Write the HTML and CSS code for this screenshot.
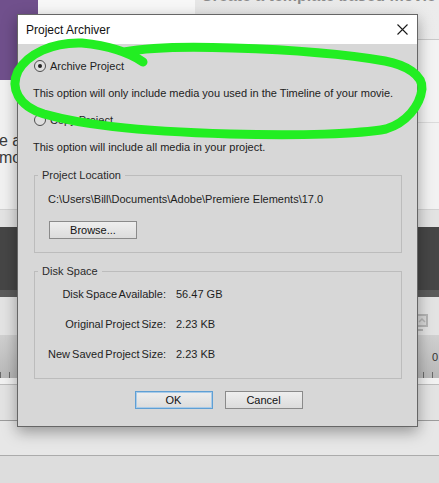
FILE: index.html
```html
<!DOCTYPE html>
<html lang="en">
<head>
    <meta charset="UTF-8">
    <title>Project Archiver</title>
    <link rel="stylesheet" href="styles.css">
</head>
<body>
    <div class="app">
        <div class="band band-top">
            <div class="side-left">
                <div class="purple"></div>
                <p class="hint">e as<br>mov</p>
            </div>
            <div class="top-main">
                <div class="header-strip"><span class="header-title">Create a template based movie</span></div>
                <div class="panel-a"></div>
                <div class="panel-b"></div>
            </div>
        </div>
        <div class="band band-sub"></div>
        <div class="band band-dark"></div>
        <div class="band band-dark2"></div>
        <div class="band band-light">
            <svg class="monitor" width="12" height="20" viewBox="0 0 12 20">
                <rect x="1" y="1" width="10" height="11" fill="#d8d8d8" stroke="#b4b4b4" stroke-width="2"/>
                <path d="M3 8 L6 5 L9 8" fill="none" stroke="#b4b4b4" stroke-width="1.5"/>
                <rect x="0" y="15" width="7" height="2" fill="#b4b4b4"/>
            </svg>
        </div>
        <div class="band band-ruler"><span class="ruler-num">0</span></div>
        <div class="band band-thin"></div>
        <div class="band band-e"></div>
        <div class="band band-f"></div>
        <div class="band band-g"></div>
    </div>

    <div class="dialog">
        <div class="titlebar">
            <span>Project Archiver</span>
            <svg class="close" width="11" height="11" viewBox="0 0 11 11">
                <path d="M0.5 0.5 L10.5 10.5 M10.5 0.5 L0.5 10.5" stroke="#1a1a1a" stroke-width="1.1"/>
            </svg>
        </div>
        <div class="dialog-body">
            <div class="option">
                <span class="radio checked"></span>
                <span>Archive Project</span>
            </div>
            <p class="desc">This option will only include media you used in the Timeline of your movie.</p>
            <div class="option">
                <span class="radio"></span>
                <span>Copy Project</span>
            </div>
            <p class="desc">This option will include all media in your project.</p>

            <fieldset class="group group-location">
                <legend>Project Location</legend>
                <div class="group-inner">
                    <div class="path">C:\Users\Bill\Documents\Adobe\Premiere Elements\17.0</div>
                    <button class="btn btn-browse">Browse...</button>
                </div>
            </fieldset>

            <fieldset class="group group-disk">
                <legend>Disk Space</legend>
                <div class="group-inner disk-grid">
                    <span class="disk-label">Disk Space Available:</span><span>56.47 GB</span>
                    <span class="disk-label">Original Project Size:</span><span>2.23 KB</span>
                    <span class="disk-label">New Saved Project Size:</span><span>2.23 KB</span>
                </div>
            </fieldset>

            <div class="actions">
                <button class="btn btn-ok">OK</button>
                <button class="btn">Cancel</button>
            </div>
        </div>
    </div>

    <svg class="scribble" width="439" height="483" viewBox="0 0 439 483">
        <path d="M143 62 C130 53 112 46 82 43 C52 42 28 54 18 71 C10 88 18 106 44 114 C80 124 130 131 230 134 C300 136 360 134 386 129 C406 123 420 106 422 89 C423 75 406 65 385 61 C345 54 300 50 233 48 C180 46 145 48 124 52"
              fill="none" stroke="#22ee22" stroke-width="9" stroke-linecap="round" stroke-linejoin="round"/>
    </svg>
</body>
</html>
```

FILE: styles.css
```css
body {
    margin: 0;
    width: 439px;
    height: 483px;
    overflow: hidden;
    position: relative;
    font-family: "Liberation Sans", Arial, sans-serif;
    background: #dcdcdc;
}
.app {
    display: flex;
    flex-direction: column;
    height: 483px;
}
.band {
    flex: none;
    box-sizing: border-box;
}
.band-top {
    height: 210px;
    display: flex;
    background: #f1f1f1;
    border-bottom: 1px solid #d2d2d2;
}
.side-left {
    width: 38px;
    flex: none;
}
.purple {
    height: 80px;
    background: #70508c;
}
.hint {
    margin: 52px 0 0 -1px;
    font-size: 16px;
    line-height: 17px;
    color: #3a3a3a;
    white-space: nowrap;
}
.top-main {
    flex: 1;
    display: flex;
    flex-direction: column;
}
.header-strip {
    height: 40px;
    box-sizing: border-box;
    background: linear-gradient(90deg, #f7f7f7 0 157px, #e6e6e6 157px, #ececec);
    border-bottom: 1px solid #c9c9c9;
    overflow: hidden;
}
.header-title {
    display: block;
    margin: -13px 0 0 163px;
    font-size: 16px;
    font-weight: bold;
    color: #8a8a8a;
    white-space: nowrap;
}
.panel-a {
    height: 83px;
    box-sizing: border-box;
    border-bottom: 1px solid #dbdbdb;
    background: #f3f3f3;
}
.panel-b {
    flex: 1;
    background: #f2f2f2;
}
.band-sub { height: 17px; background: #e3e3e3; }
.band-dark { height: 63px; background: #464646; }
.band-dark2 { height: 7px; background: #5b5b5b; }
.band-light {
    height: 38px;
    background: #e3e3e3;
    display: flex;
    justify-content: flex-end;
    align-items: flex-start;
}
.monitor {
    margin: 17px 11px 0 0;
}
.band-ruler {
    height: 43px;
    background:
        repeating-linear-gradient(90deg, #6a6a6a 0 1px, transparent 1px 9px) left bottom / 100% 6px no-repeat,
        linear-gradient(#d0d0d0, #b8b8b8);
    display: flex;
    justify-content: flex-end;
    align-items: center;
}
.ruler-num {
    margin-right: 1px;
    font-size: 11px;
    color: #333;
}
.band-thin {
    height: 7px;
    background: #f2f2f2;
    border-bottom: 1px solid #bdbdbd;
}
.band-e {
    height: 36px;
    background: #e3e3e3;
    border-bottom: 1px solid #9c9c9c;
}
.band-f {
    height: 35px;
    background: #e7e7e7;
    border-bottom: 1px solid #ababab;
}
.band-g {
    flex: 1;
    background: #dddddd;
}

/* dialog */
.dialog {
    position: absolute;
    left: 17px;
    top: 14px;
    width: 401px;
    height: 413px;
    box-sizing: border-box;
    border: 1px solid #666;
    background: #d7d7d7;
    box-shadow: 0 5px 14px rgba(0,0,0,0.35);
    display: flex;
    flex-direction: column;
    color: #1e1e1e;
}
.titlebar {
    height: 29px;
    flex: none;
    background: #fff;
    display: flex;
    align-items: center;
    justify-content: space-between;
    padding: 0 9px 0 8px;
    font-size: 12px;
    color: #111;
}
.dialog-body {
    padding: 0 15px 0 16px;
    font-size: 11px;
    line-height: 16px;
}
.option {
    display: flex;
    align-items: center;
    gap: 4px;
    margin-top: 11px;
}
.option:first-child {
    margin-top: 14px;
}
.radio {
    width: 12px;
    height: 12px;
    box-sizing: border-box;
    border: 1px solid #4e4e4e;
    border-radius: 50%;
    background: #dedede;
    display: flex;
    align-items: center;
    justify-content: center;
}
.radio.checked::after {
    content: "";
    width: 4px;
    height: 4px;
    border-radius: 50%;
    background: #222;
}
.desc {
    margin: 11px 0 0 -1px;
    color: #222;
}
.group {
    margin: 13px 0 0;
    padding: 0 0 0 3px;
    border: 1px solid #bcbcbc;
    min-width: 0;
}
.group legend {
    padding: 0 4px;
    line-height: 14px;
    color: #2a2a2a;
}
.group-inner {
    padding-left: 10px;
}
.group-location .group-inner {
    padding-top: 9px;
    padding-bottom: 13px;
}
.btn {
    display: block;
    height: 18px;
    width: 78px;
    padding: 0;
    font: 11px "Liberation Sans", Arial, sans-serif;
    color: #111;
    background: linear-gradient(#eeeeee, #dcdcdc);
    border: 1px solid #8a8a8a;
    border-radius: 0;
}
.btn-browse {
    width: 88px;
    margin: 14px 0 0 1px;
}
.group-disk {
    margin-top: 11px;
}
.disk-grid {
    display: grid;
    grid-template-columns: 118px auto;
    column-gap: 10px;
    row-gap: 14px;
    padding-top: 8px;
    padding-bottom: 16px;
}
.disk-label {
    text-align: right;
    white-space: nowrap;
    word-spacing: -1px;
}
.actions {
    display: flex;
    justify-content: center;
    gap: 12px;
    margin-top: 12px;
    padding-left: 1px;
}
.btn-ok {
    border-color: #5f9fd4;
    box-shadow: inset 0 0 0 1px #a9cbe8;
}

.scribble {
    position: absolute;
    left: 0;
    top: 0;
    pointer-events: none;
}
```
